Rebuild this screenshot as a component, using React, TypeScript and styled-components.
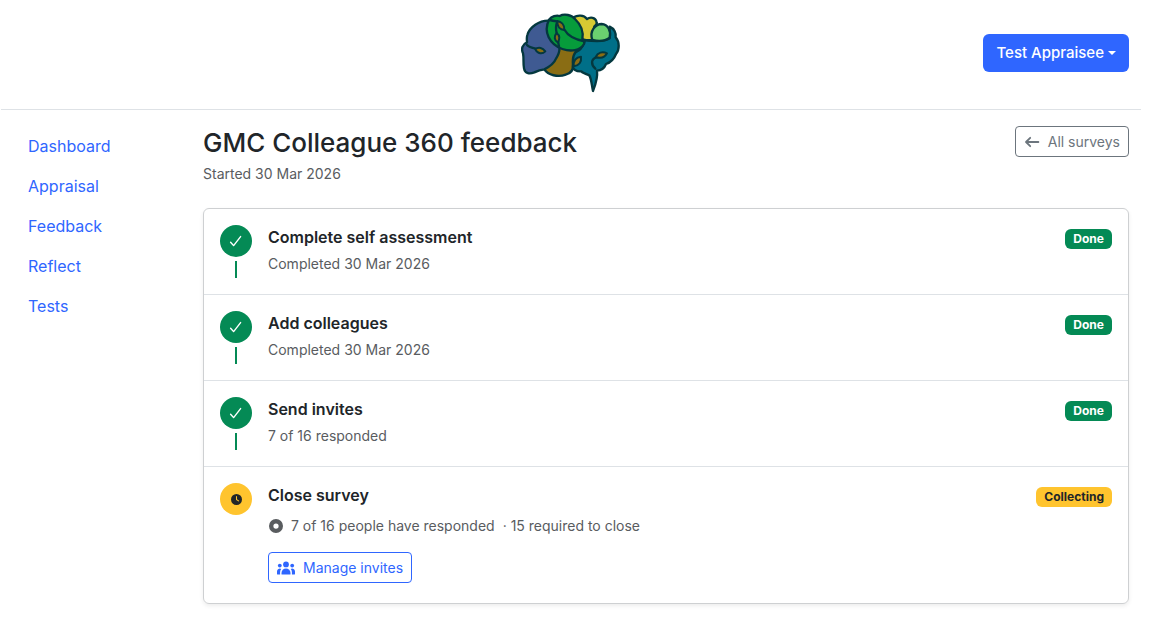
import React from "react";
import styled, { createGlobalStyle } from "styled-components";
import { FaCircleDot, FaClock } from "react-icons/fa6";

const GlobalStyle = createGlobalStyle`
  *, *::before, *::after { box-sizing: border-box; }
  body {
    margin: 0;
    background: #fff;
    color: #212529;
    font-family: Inter, "Liberation Sans", sans-serif;
    font-size: 16px;
    line-height: 24px;
  }
`;

const Page = styled.div`
  padding-right: 15px;
`;

const Header = styled.header`
  display: grid;
  grid-template-columns: 1fr auto 1fr;
  align-items: center;
  margin-left: 1px;
  padding: 12px 12px 15px;
  border-bottom: 1px solid #dee2e6;
`;

const LogoLink = styled.a`
  grid-column: 2;
  display: block;
  height: 82px;
`;

const UserButton = styled.button`
  justify-self: end;
  display: inline-flex;
  align-items: center;
  gap: 4px;
  height: 38px;
  padding: 0 13px;
  border: 0;
  border-radius: 6px;
  background: #2f66ff;
  color: #fff;
  font: inherit;
  font-size: 15px;
  font-weight: 500;
`;

const Caret = styled.span`
  border-top: 4px solid currentColor;
  border-left: 4px solid transparent;
  border-right: 4px solid transparent;
`;

const Body = styled.div`
  display: grid;
  grid-template-columns: 179px minmax(0, 1fr);
  gap: 12px;
  padding: 16px 12px 40px;
`;

const Nav = styled.nav`
  display: flex;
  flex-direction: column;
`;

const NavLink = styled.a`
  padding: 8px 16px;
  color: #2f66ff;
  text-decoration: none;
`;

const TitleBar = styled.div`
  display: flex;
  justify-content: space-between;
  align-items: flex-start;
  margin-bottom: 24px;
`;

const Title = styled.h1`
  margin: 0 0 4px;
  font-size: 26px;
  line-height: 34px;
  font-weight: 500;
`;

const Muted = styled.p`
  margin: 0;
  color: #595c5f;
  font-size: 14px;
  line-height: 20px;
`;

const OutlineButton = styled.button<{ $color: string }>`
  display: inline-flex;
  align-items: center;
  gap: 8px;
  height: 31px;
  padding: 0 8px;
  border: 1px solid ${(p) => p.$color};
  border-radius: 4px;
  background: #fff;
  color: ${(p) => p.$color};
  font: inherit;
  font-size: 14px;
`;

const Card = styled.ol`
  margin: 0;
  padding: 0;
  list-style: none;
  border: 1px solid #ced0d2;
  border-radius: 6px;
  box-shadow: 0 2px 4px rgba(0, 0, 0, 0.075);
`;

const Step = styled.li`
  display: flex;
  align-items: flex-start;
  gap: 16px;
  padding: 16px;

  & + & {
    border-top: 1px solid #dee2e6;
  }
`;

const Marker = styled.div`
  display: flex;
  flex-direction: column;
  align-items: center;
  gap: 4px;
`;

const Dot = styled.span<{ $pending?: boolean }>`
  display: flex;
  align-items: center;
  justify-content: center;
  width: 32px;
  height: 32px;
  border-radius: 50%;
  background: ${(p) => (p.$pending ? "#ffc42e" : "#048a55")};
  color: ${(p) => (p.$pending ? "#212529" : "#fff")};
`;

const Connector = styled.span`
  width: 2px;
  height: 17px;
  background: #048a55;
`;

const StepText = styled.div`
  flex: 1;
  display: flex;
  flex-direction: column;
  align-items: flex-start;
  gap: 5px;
`;

const StepTitle = styled.h2`
  margin: 0;
  font-size: 16px;
  line-height: 24px;
  font-weight: 600;
`;

const Progress = styled(Muted)`
  display: flex;
  align-items: center;
  gap: 8px;
  padding: 4px 1px 11px;
`;

const Bottom = styled.div`
  padding-bottom: 4px;

  button {
    display: flex;
  }
`;

const Badge = styled.span<{ $pending?: boolean }>`
  margin-top: 4px;
  padding: 0 8px;
  border-radius: 6px;
  background: ${(p) => (p.$pending ? "#ffc42e" : "#048a55")};
  color: ${(p) => (p.$pending ? "#212529" : "#fff")};
  font-size: 12px;
  line-height: 20px;
  font-weight: 700;
`;

const BrainLogo = () => (
  <svg width="101" height="82" viewBox="34 21 303 246" role="img" aria-label="Home">
    <g stroke="#04383f" strokeWidth="7" strokeLinejoin="round" strokeLinecap="round">
      <path fill="#8a6d14" d="M104 193C115 210 145 218 168 209C184 205 191 193 190 180L202 137L148 125Z" />
      <path fill="#3f5a92" d="M118 47C88 46 60 66 53 90C50 99 52 106 52 112C38 118 34 132 40 145C43 160 40 176 43 190C46 207 61 207 74 202C86 196 92 194 104 193C118 186 134 174 139 161C147 148 152 134 148 122Z" />
      <path fill="#006f88" d="M224 105C250 109 283 112 300 100L300 65C314 71 320 85 318 97C330 111 330 134 319 147C312 165 301 173 289 177C284 190 275 196 262 197C265 220 258 237 250 258C246 242 246 224 239 211C226 206 220 204 215 199C200 200 188 193 190 182C188 160 193 141 206 137C217 130 222 120 224 105Z" />
      <path fill="#d6c933" d="M192 37C203 30 222 29 232 42C242 35 257 37 260 49C265 57 258 61 254 64L248 105C237 107 227 105 219 103Z" />
      <path fill="#6bd070" d="M248 105C238 76 259 57 276 57C295 58 305 78 300 98C286 109 265 109 248 105Z" />
      <path fill="#069c3b" d="M118 44C126 34 140 30 150 33C164 25 187 30 196 42C215 60 222 82 218 103C226 108 225 113 223 117C212 137 184 141 158 132C120 118 100 81 118 44Z" />
      <path fill="none" d="M52 120C58 127 69 129 79 131M120 45C128 47 135 48 142 49M143 50C138 61 138 72 141 84M165 75C176 95 199 104 224 109M146 109C145 114 147 119 148 124M260 157C244 162 243 178 257 191" />
      <g fill="#8a6d14" strokeWidth="6">
        <path d="M77 133C87 124 99 129 107 139C98 148 84 147 77 133Z" />
        <path d="M143 48C154 50 165 59 164 75C152 74 142 65 143 48Z" />
        <path d="M141 84C151 91 151 103 144 112C134 106 132 94 141 84Z" />
        <path d="M192 184C190 168 199 156 214 155C216 171 209 182 192 184Z" />
        <path d="M258 156C264 143 278 138 292 145C285 158 272 161 258 156Z" />
      </g>
    </g>
  </svg>
);

const CheckIcon = () => (
  <svg width="14" height="14" viewBox="0 0 14 14" fill="none" aria-hidden="true">
    <path d="M1.6 8.2L4.6 11.6L11.6 2.6" stroke="currentColor" strokeWidth="1.4" strokeLinecap="round" strokeLinejoin="round" />
  </svg>
);

const ArrowIcon = () => (
  <svg width="16" height="14" viewBox="0 0 16 14" fill="none" aria-hidden="true">
    <path d="M14.4 7H2.4M6.2 2.8L2 7L6.2 11.2" stroke="currentColor" strokeWidth="1.8" strokeLinecap="round" strokeLinejoin="round" />
  </svg>
);

const UsersIcon = () => (
  <svg width="18" height="14" viewBox="0 0 18 14" fill="currentColor" aria-hidden="true">
    <circle cx="9" cy="3.4" r="2.9" />
    <circle cx="2.8" cy="4.6" r="1.9" />
    <circle cx="15.2" cy="4.6" r="1.9" />
    <path d="M4.5 13.2V12A4.5 4.5 0 0 1 13.5 12V13.2Q13.5 13.5 13.1 13.5H4.9Q4.5 13.5 4.5 13.2Z" />
    <path d="M0.3 13.5Q0 13.5 0 13.1V10.5A2.9 2.9 0 0 1 4.2 7.9A5.8 5.8 0 0 0 3.1 11.6V13.5Z" />
    <path d="M17.7 13.5Q18 13.5 18 13.1V10.5A2.9 2.9 0 0 0 13.8 7.9A5.8 5.8 0 0 1 14.9 11.6V13.5Z" />
  </svg>
);

const links = ["Dashboard", "Appraisal", "Feedback", "Reflect", "Tests"];

const doneSteps = [
  { title: "Complete self assessment", detail: "Completed 30 Mar 2026" },
  { title: "Add colleagues", detail: "Completed 30 Mar 2026" },
  { title: "Send invites", detail: "7 of 16 responded" },
];

export default function App() {
  return (
    <Page>
      <GlobalStyle />
      <Header>
        <LogoLink href="#home">
          <BrainLogo />
        </LogoLink>
        <UserButton type="button" aria-haspopup="menu">
          Test Appraisee
          <Caret />
        </UserButton>
      </Header>
      <Body>
        <Nav>
          {links.map((label) => (
            <NavLink key={label} href={`#${label.toLowerCase()}`}>
              {label}
            </NavLink>
          ))}
        </Nav>
        <main>
          <TitleBar>
            <div>
              <Title>GMC Colleague 360 feedback</Title>
              <Muted>Started 30 Mar 2026</Muted>
            </div>
            <OutlineButton type="button" $color="#6c757d">
              <ArrowIcon />
              All surveys
            </OutlineButton>
          </TitleBar>
          <Card>
            {doneSteps.map((step) => (
              <Step key={step.title}>
                <Marker>
                  <Dot>
                    <CheckIcon />
                  </Dot>
                  <Connector />
                </Marker>
                <StepText>
                  <StepTitle>{step.title}</StepTitle>
                  <Muted>{step.detail}</Muted>
                </StepText>
                <Badge>Done</Badge>
              </Step>
            ))}
            <Step>
              <Marker>
                <Dot $pending>
                  <FaClock size={11} />
                </Dot>
              </Marker>
              <StepText>
                <StepTitle>Close survey</StepTitle>
                <Progress>
                  <FaCircleDot size={14} />
                  <span>7 of 16 people have responded</span>
                  <span>· 15 required to close</span>
                </Progress>
                <Bottom>
                  <OutlineButton type="button" $color="#2f66ff">
                    <UsersIcon />
                    Manage invites
                  </OutlineButton>
                </Bottom>
              </StepText>
              <Badge $pending>Collecting</Badge>
            </Step>
          </Card>
        </main>
      </Body>
    </Page>
  );
}
